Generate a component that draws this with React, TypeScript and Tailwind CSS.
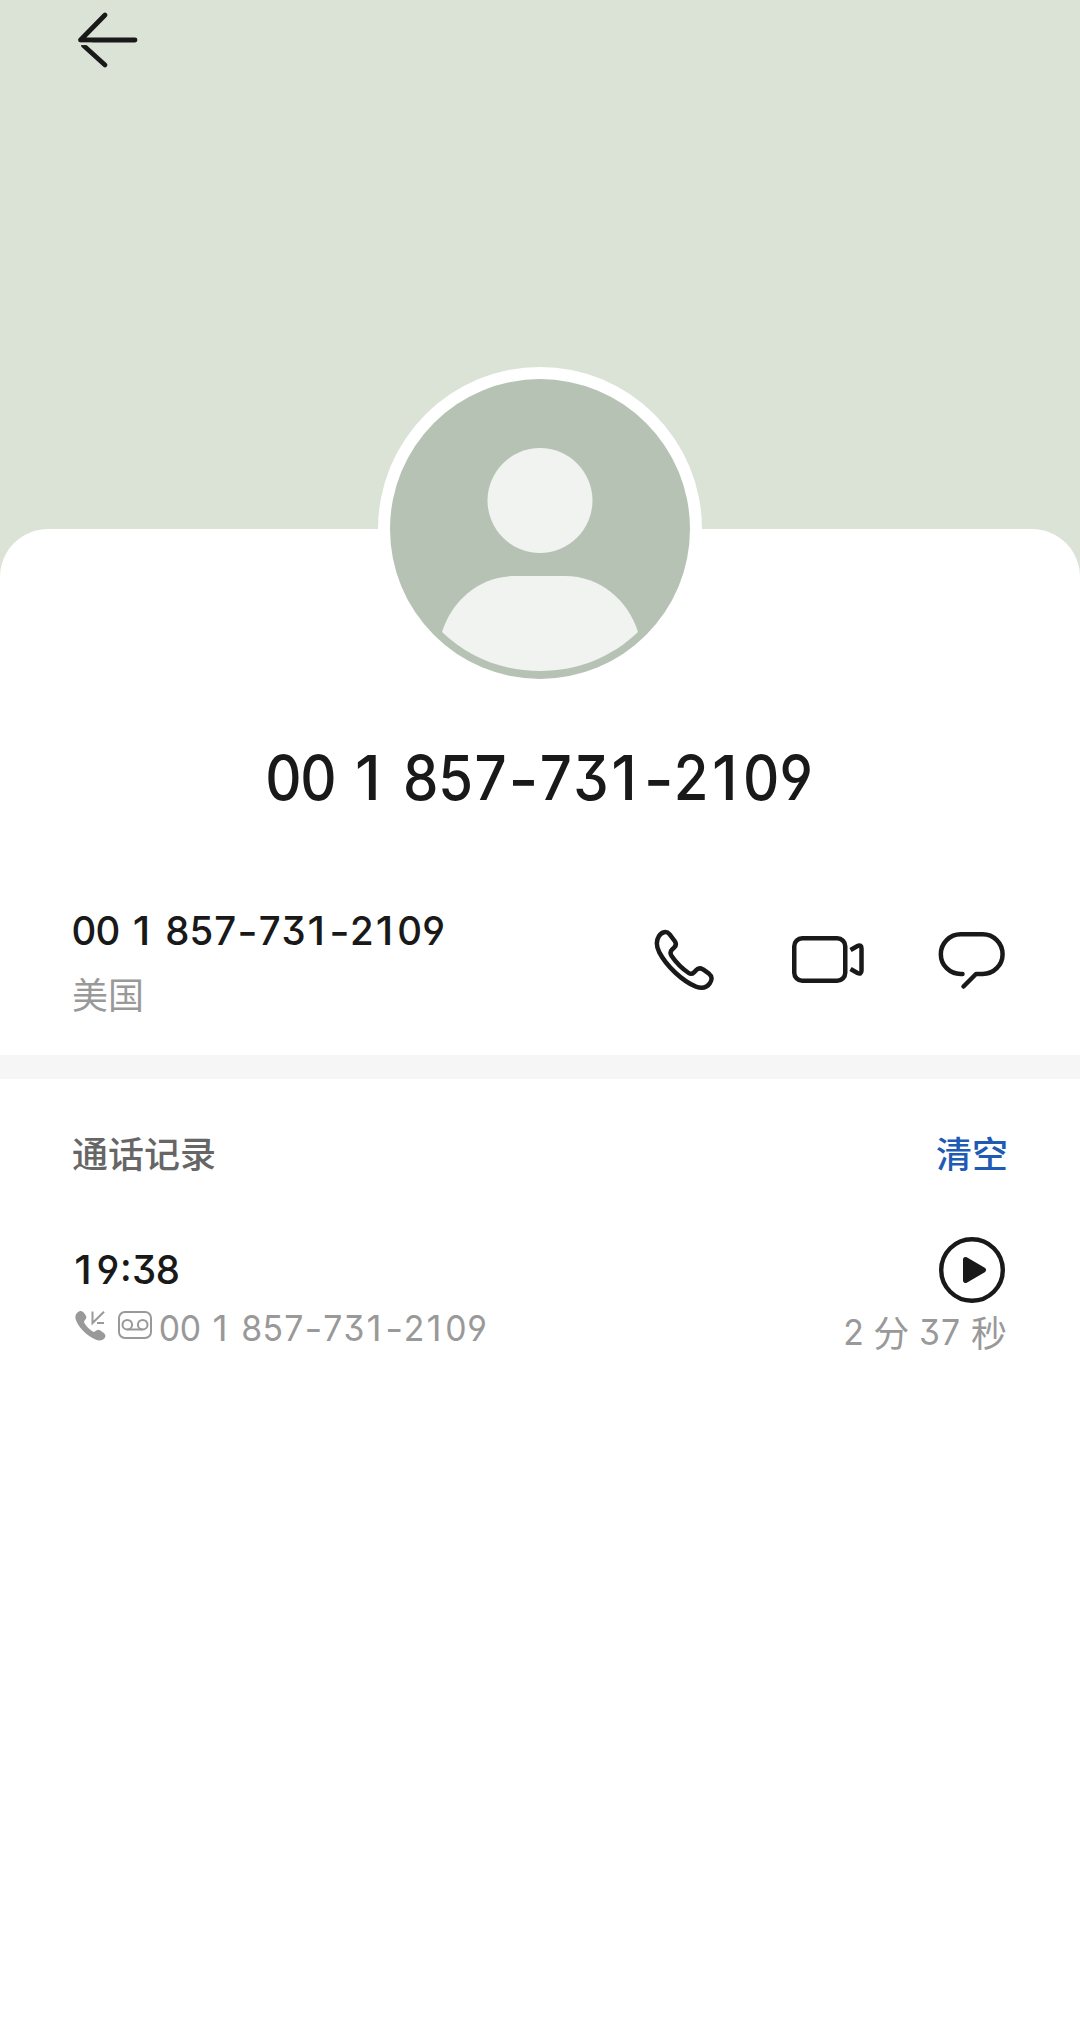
const ink = "#191919";

function BackIcon() {
  return (
    <svg width="100" height="80" viewBox="0 0 100 80" fill="none" stroke={ink} strokeWidth="4.8" strokeLinecap="round">
      <path d="M75 40H20.500L45 15" strokeLinejoin="round" />
      <path d="M23.500 45.500L45 65" />
      <path d="M16 43.900H32" stroke="#dbe3d7" strokeWidth="2.4" strokeLinecap="butt" />
    </svg>
  );
}

function Avatar() {
  return (
    <svg width="324" height="324" viewBox="0 0 324 324">
      <circle cx="162" cy="162" r="162" fill="#fff" />
      <circle cx="162" cy="162" r="150" fill="#b6c2b3" />
      <circle cx="162" cy="133.5" r="52.5" fill="#f0f3f0" />
      <path d="M64 265C74 233 102 209 137 209H187C222 209 250 233 260 265C234 290 200 304 162 304C124 304 90 290 64 265Z" fill="#f0f3f0" />
    </svg>
  );
}

function PhoneIcon() {
  return (
    <svg width="63" height="63" viewBox="36 51 189 189" fill="none" stroke={ink} strokeWidth="13.500" strokeLinejoin="round">
      <path d="M57 75C65 62 80 59 89 70L104 90C109 97 108 104 103 109L96 116C90 122 91 129 95 135C107 153 127 173 146 186C152 190 157 189 162 184L168 178C174 171 182 171 189 175L207 188C216 195 217 206 210 216C201 230 185 233 168 227C128 211 80 166 58 124C48 105 47 91 57 75Z" />
    </svg>
  );
}

function VideoIcon() {
  return (
    <svg width="72" height="47" viewBox="0 0 72 47" fill="none" stroke={ink} strokeWidth="4.500">
      <rect x="2.250" y="2.250" width="51" height="42.500" rx="8" />
      <path d="M58.500 14L65.500 10C68 8.700 69.500 9.800 69.500 12.500V34.500C69.500 37.200 68 38.300 65.500 37L58.500 33" />
    </svg>
  );
}

function ChatIcon() {
  return (
    <svg width="67" height="58" viewBox="0 0 67 58" fill="none" stroke={ink} strokeWidth="4.500" strokeLinecap="round" strokeLinejoin="round">
      <path d="M24.500 42H22.700A19.875 19.875 0 0 1 22.700 2.250H44.700A19.875 19.875 0 0 1 44.700 42H38L25.500 54.500" />
    </svg>
  );
}

function IncomingIcon() {
  return (
    <svg width="32" height="32" viewBox="0 0 32 32" fill="none" stroke="#999" strokeWidth="2">
      <path d="M1.200 4C3.500 .400 6.500 0 8.700 2.600L10.800 5.600C11.800 7.200 11.500 8.400 10.200 9.700C8.900 11 8.700 12 9.700 13.500C11.700 16.500 14 19 17.300 21.200C18.700 22.200 19.700 22.100 21 20.800C22.500 19.500 23.700 19.400 25.300 20.500L28.800 23C30.800 24.600 30.900 26.500 29.500 28.300C27 31 23.500 30.800 20.500 29.500C12.500 26 5 19 1.400 11.200C.200 8.500 0 6 1.200 4Z" fill="#999" stroke="none" />
      <path d="M17.500 1.500V13L29 1.700M22 13H29" />
    </svg>
  );
}

function VoicemailIcon() {
  return (
    <svg width="34" height="28" viewBox="0 0 34 28" fill="none" stroke="#999" strokeWidth="2">
      <rect x="1" y="1" width="32" height="26" rx="6" />
      <circle cx="9.300" cy="13.700" r="4.800" />
      <circle cx="24.700" cy="13.700" r="4.800" />
      <path d="M9.300 18.500H24.700" />
    </svg>
  );
}

function PlayIcon() {
  return (
    <svg width="66" height="66" viewBox="0 0 66 66">
      <circle cx="33" cy="33" r="30.800" fill="none" stroke={ink} strokeWidth="4.400" />
      <path d="M26.500 22.500L44.500 33L26.500 43.500Z" fill={ink} stroke={ink} strokeWidth="5" strokeLinejoin="round" />
    </svg>
  );
}

const cells: Record<string, string> = {
  " ": "w-[0.285em] whitespace-pre",
  "-": "w-[0.537em] relative top-[0.03em] scale-x-[1.15]",
  ":": "w-[0.32em] relative -top-[0.07em]",
  "1": "w-[0.622em] relative -left-[0.03em] scale-x-[1.1]",
};

/* Condensed figures set on an even pitch, with narrower cells for punctuation. */
function Numeral({ className, value }: { className: string; value: string }) {
  return (
    <span className={`flex w-max origin-left font-['Inter',sans-serif] [font-feature-settings:'ss01','cv03','cv04'] ${className}`}>
      {[...value].map((c, i) => (
        <span key={i} className={`flex shrink-0 justify-center ${cells[c] ?? "w-[0.622em]"}`}>
          {c}
        </span>
      ))}
    </span>
  );
}

export default function App() {
  return (
    <main className="min-h-[2017px] w-[1080px] overflow-hidden bg-[#dbe3d7] font-['Noto_Sans_CJK_SC',sans-serif] text-[#191919]">
      <header className="h-[529px] pl-[60px]">
        <BackIcon />
      </header>
      <section className="flex min-h-[1488px] flex-col rounded-t-[48px] bg-white">
        <div className="-mt-[162px] flex h-[324px] justify-center">
          <Avatar />
        </div>
        <h1 className="mt-[47px] h-[80px] pl-[266px]">
          <Numeral className="text-[62px] leading-[80px] font-medium scale-x-[0.908]" value="00 1 857-731-2109" />
        </h1>
        <div className="mt-[87px] flex h-[150px] justify-between pr-[75px] pl-[72px]">
          <div className="w-[400px]">
            <Numeral className="text-[40px] leading-[52px] font-medium scale-x-[0.96]" value="00 1 857-731-2109" />
            <p className="mt-[10px] text-[36px] leading-[52px] text-[#999]">美国</p>
          </div>
          <div className="flex">
            <div className="mt-[23px] mr-[77px]"><PhoneIcon /></div>
            <div className="mt-[31px] mr-[74px]"><VideoIcon /></div>
            <div className="mt-[27px]"><ChatIcon /></div>
          </div>
        </div>
        <div className="h-6 bg-[#f6f6f6]" />
        <div className="mt-[47px] flex h-[52px] justify-between px-[72px] text-[36px] leading-[52px] font-medium">
          <h2 className="text-[#666]">通话记录</h2>
          <button className="text-[#1f5ab5]">清空</button>
        </div>
        <div className="mt-[59px] flex h-[120px] justify-between pr-[73px] pl-[72px]">
          <div>
            <Numeral className="mt-[7px] text-[40px] leading-[52px] font-medium scale-x-[0.96]" value="19:38" />
            <div className="mt-[13px] flex items-start">
              <div className="mt-[1px] ml-[3px]"><IncomingIcon /></div>
              <div className="mt-[2px] ml-[11px]"><VoicemailIcon /></div>
              <Numeral className="-mt-[4px] ml-[7px] text-[36px] leading-[46px] text-[#999] scale-x-[0.938]" value="00 1 857-731-2109" />
            </div>
          </div>
          <div className="flex flex-col items-end">
            <button aria-label="播放" className="mr-[2px]"><PlayIcon /></button>
            <p className="mt-[2px] flex text-[36px] leading-[52px] text-[#999]">
              <Numeral className="mt-px mr-[8px] text-[36px] leading-[52px] scale-x-[0.938]" value="2" />
              <span>分</span>
              <Numeral className="mt-px mr-[7px] ml-[10px] text-[36px] leading-[52px] scale-x-[0.938]" value="37" />
              <span>秒</span>
            </p>
          </div>
        </div>
      </section>
    </main>
  );
}
